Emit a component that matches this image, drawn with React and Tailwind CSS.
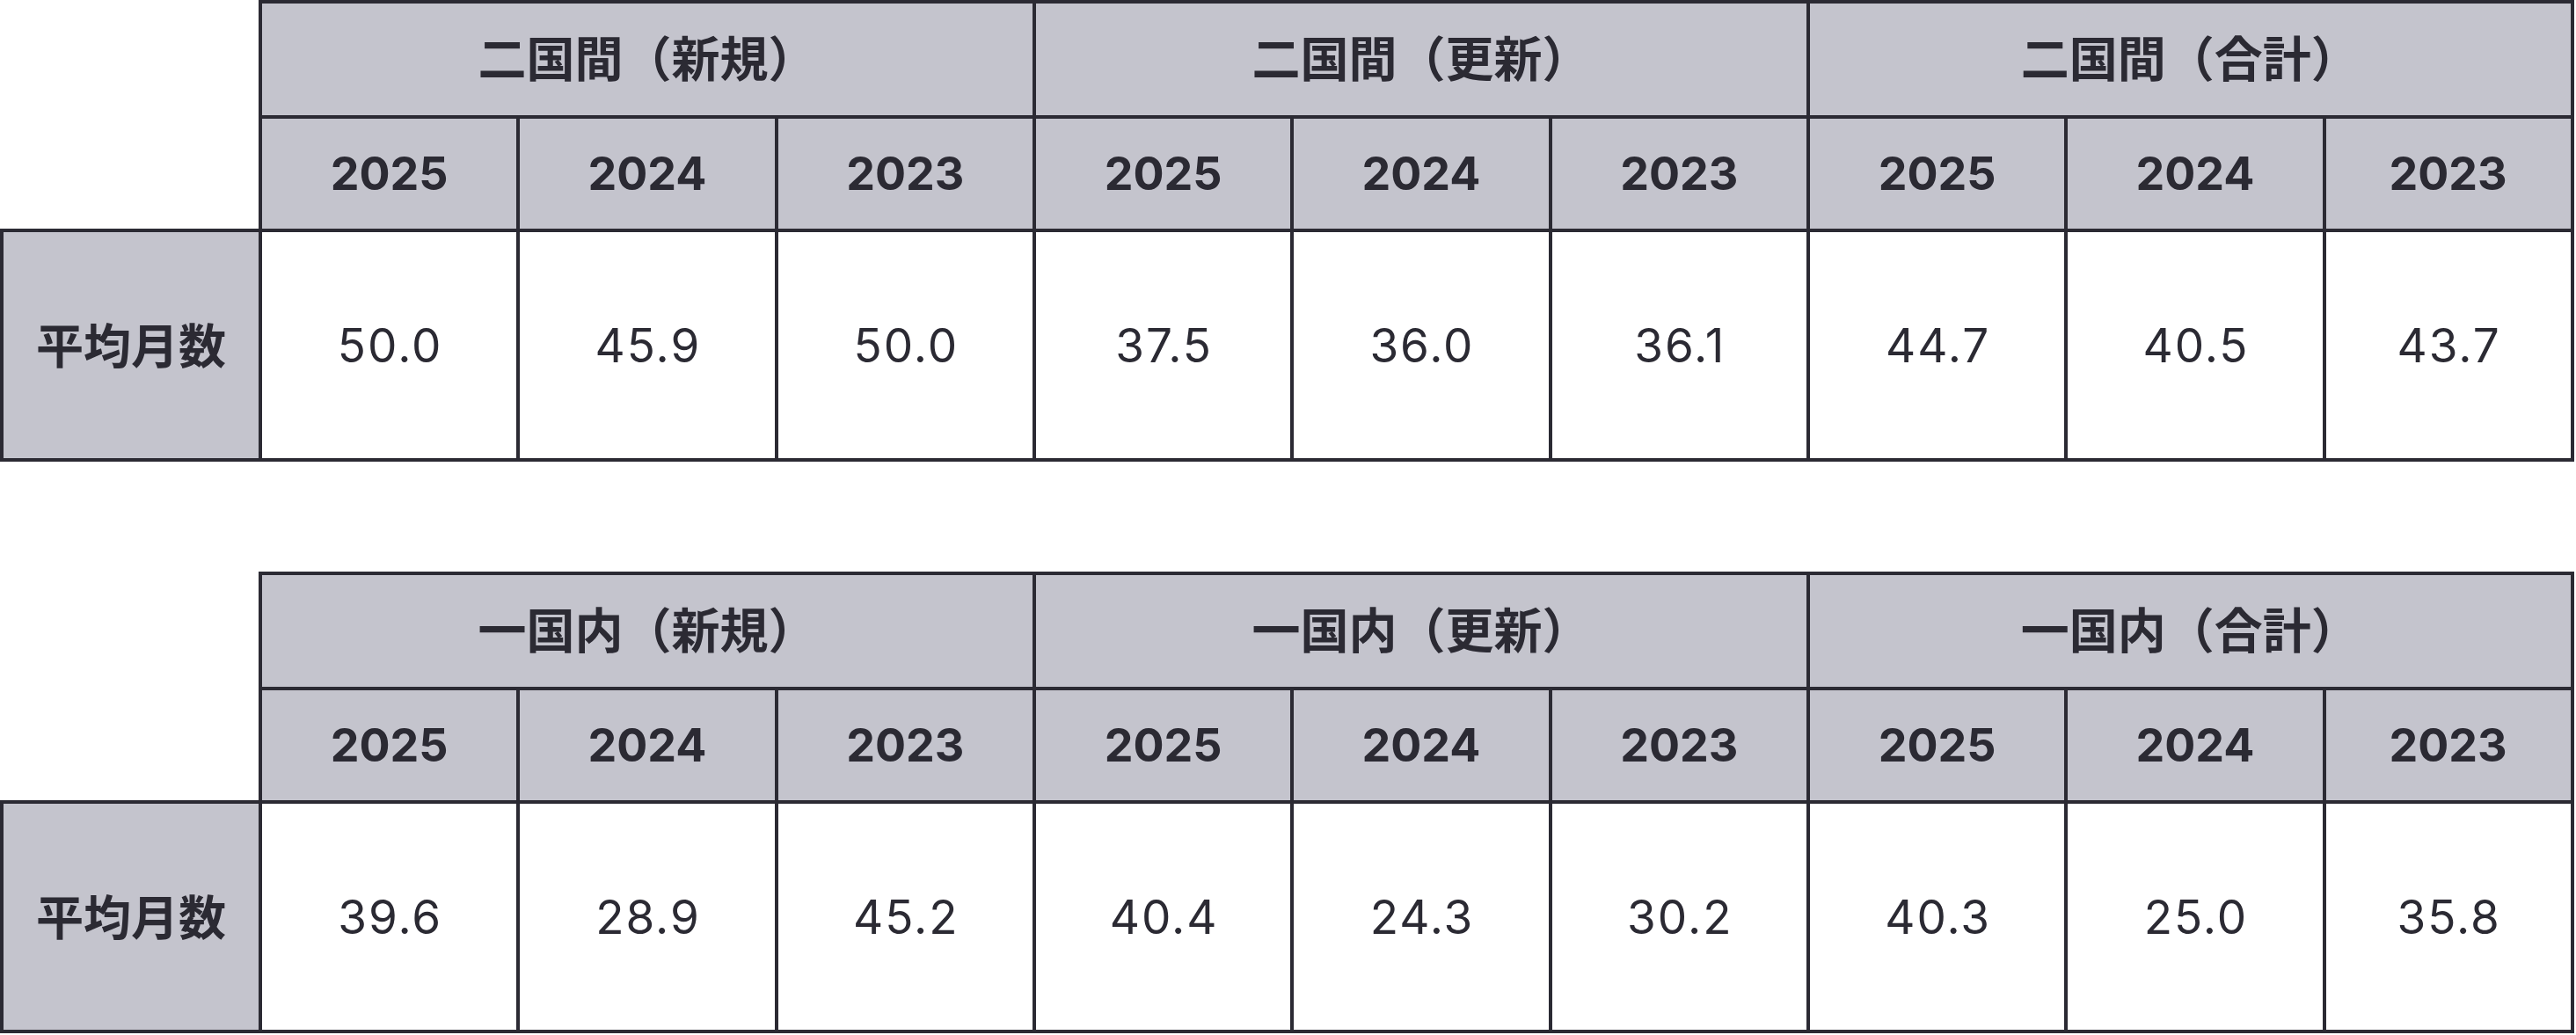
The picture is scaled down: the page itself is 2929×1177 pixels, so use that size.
import React from "react";

// 平均月数テーブル（二国間 / 一国内）
const years = ["2025", "2024", "2023"];

const tables = [
  {
    prefix: "二国間",
    values: ["50.0", "45.9", "50.0", "37.5", "36.0", "36.1", "44.7", "40.5", "43.7"],
  },
  {
    prefix: "一国内",
    values: ["39.6", "28.9", "45.2", "40.4", "24.3", "30.2", "40.3", "25.0", "35.8"],
  },
];

const groups = ["新規", "更新", "合計"];

const jp = "font-['Noto_Sans_CJK_JP',sans-serif]";
const num = "font-['Inter','Noto_Sans_CJK_JP',sans-serif]";

function StatTable({ prefix, values }) {
  return (
    <div className="grid w-[2927px] grid-cols-[298px_repeat(8,293.33px)_282px] grid-rows-[135px_129px_261px] text-[#2b2a33]">
      {/* 左上の空白セル */}
      <div className="row-span-2 border-r-4 border-b-4 border-[#2b2a33] bg-white"></div>

      {groups.map((g) => (
        <div
          key={g}
          className={`col-span-3 flex items-center justify-center border-t-4 border-r-4 border-b-4 border-[#2b2a33] bg-[#c4c4cd] pb-[8px] text-[55px] font-bold ${jp}`}
        >
          {prefix}（{g}）
        </div>
      ))}

      {groups.map((g) =>
        years.map((y) => (
          <div
            key={g + y}
            className={`flex items-center justify-center border-r-4 border-b-4 border-[#2b2a33] bg-[#c4c4cd] text-[52px] font-bold ${num}`}
          >
            {y}
          </div>
        ))
      )}

      <div
        className={`flex items-center justify-center border-l-4 border-r-4 border-b-4 border-[#2b2a33] bg-[#c4c4cd] pb-[4px] text-[54px] font-bold ${jp}`}
      >
        平均月数
      </div>

      {values.map((v, i) => (
        <div
          key={i}
          className={`flex items-center justify-center border-r-4 border-b-4 border-[#2b2a33] bg-white pl-[2px] pt-[2px] text-[53px] tracking-[2px] ${num}`}
        >
          {v}
        </div>
      ))}
    </div>
  );
}

export default function App() {
  return (
    <div className="flex h-[1177px] w-[2929px] flex-col gap-[125px] bg-white">
      {tables.map((t) => (
        <StatTable key={t.prefix} prefix={t.prefix} values={t.values} />
      ))}
    </div>
  );
}
